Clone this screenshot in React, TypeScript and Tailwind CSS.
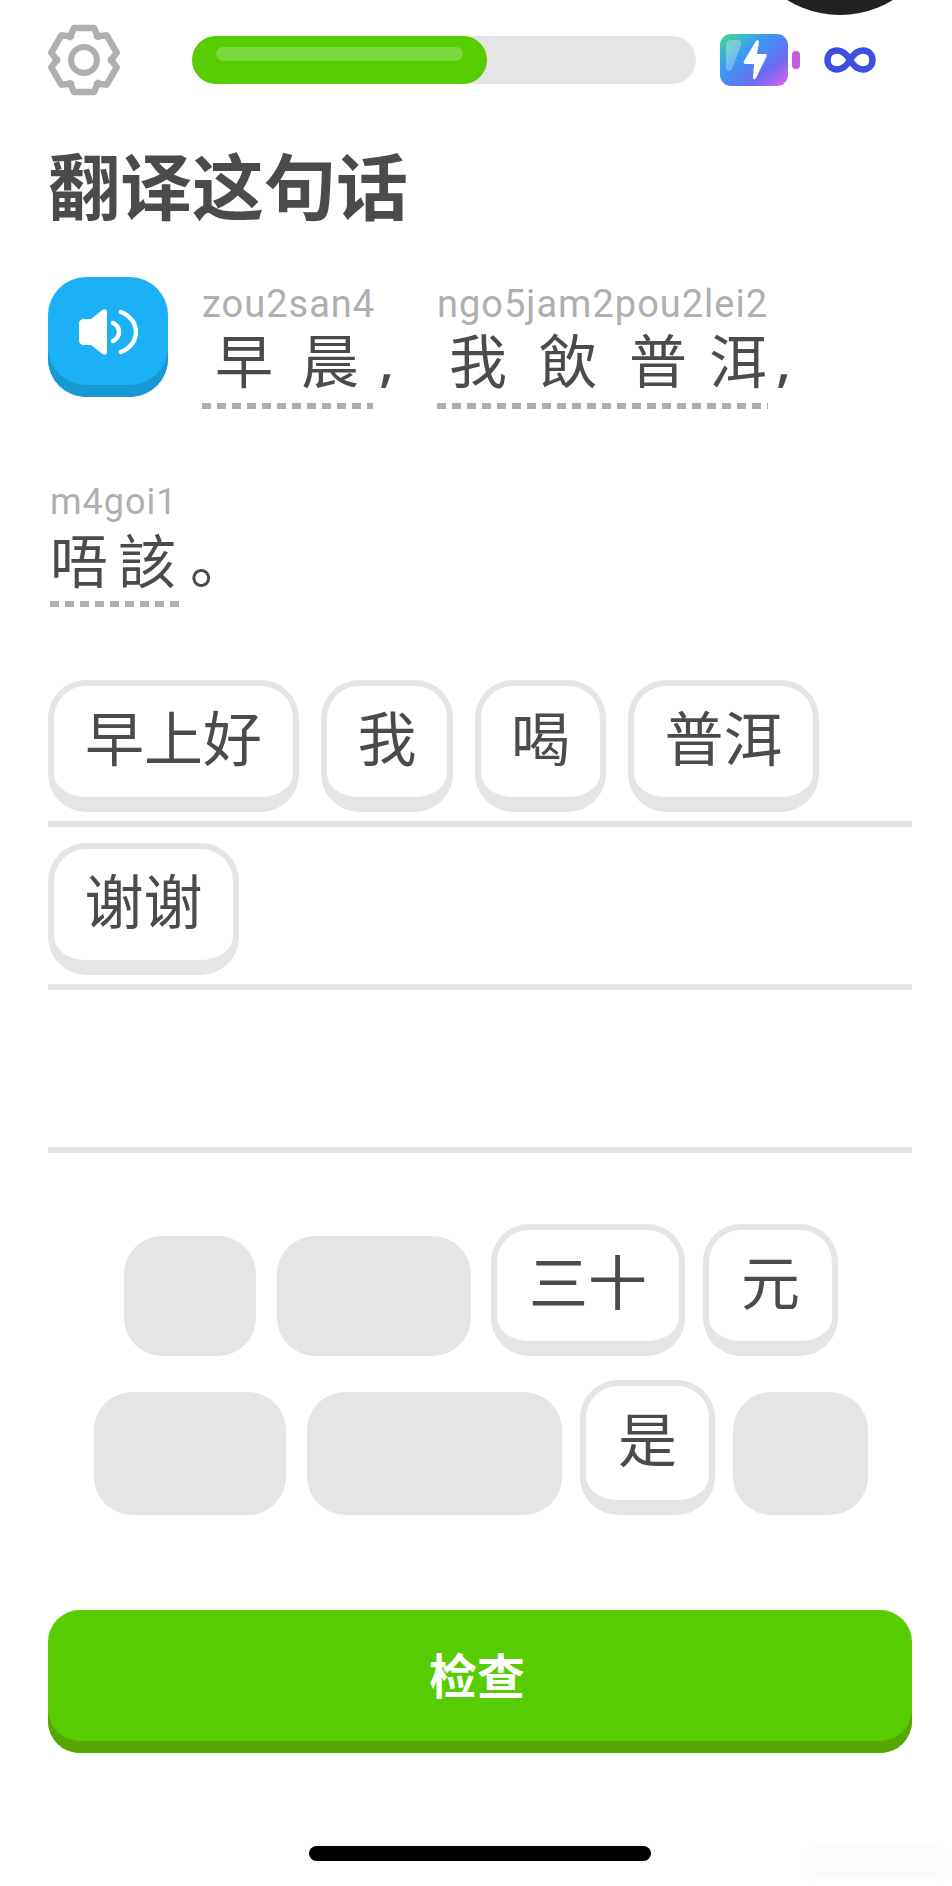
import React from 'react';

const cjk = 'font-["Noto_Sans_CJK_SC","Noto_Sans",sans-serif]';
const roboto = "font-['Roboto',sans-serif]";

// six blunt teeth around the centre, viewBox 72x72
const gearPath = () => {
  const pts: string[] = [];
  for (let i = 0; i < 6; i++) {
    const a = (i * Math.PI) / 3 - Math.PI / 2;
    const at = (r: number, off: number) => {
      const x = 36 + r * Math.cos(a) - off * Math.sin(a);
      const y = 36 + r * Math.sin(a) + off * Math.cos(a);
      return `${x.toFixed(1)} ${y.toFixed(1)}`;
    };
    pts.push(at(23, -14), at(32, -10), at(32, 10), at(23, 14));
  }
  return `M${pts.join('L')}Z`;
};

const Gear = () => (
  <svg width="72" height="72" viewBox="0 0 72 72" className="shrink-0">
    <path d={gearPath()} fill="none" stroke="#afafaf" strokeWidth="6.500" strokeLinejoin="round" />
    <circle cx="36" cy="36" r="13" fill="none" stroke="#afafaf" strokeWidth="6" />
  </svg>
);

const Dashes = () => (
  <div className="h-[6px] bg-[repeating-linear-gradient(90deg,#afafaf_0,#afafaf_9px,transparent_9px,transparent_15px)]" />
);

const Tile: React.FC<{ w: string; h?: string; label: string }> = ({ w, h = 'h-[132px]', label }) => (
  <div className={`${w} ${h} shrink-0 rounded-[38px] border-[6px] border-b-[15px] border-[#e5e5e5] bg-white pb-[13px] flex items-center justify-center text-[59px] leading-none text-[#4b4b4b] ${cjk}`}>
    {label}
  </div>
);

const Ghost: React.FC<{ w: string; h: string }> = ({ w, h }) => (
  <div className={`${w} ${h} shrink-0 rounded-[38px] bg-[#e5e5e5]`} />
);

const AnswerRow: React.FC<{ children?: React.ReactNode }> = ({ children }) => (
  <div className="h-[163px] pt-[16px] border-b-[6px] border-[#e5e5e5] flex gap-[22px]">{children}</div>
);

const Battery = () => (
  <svg width="80" height="52" viewBox="0 0 80 52" className="shrink-0">
    <defs>
      <linearGradient id="batt" x1="0" y1="0" x2="1" y2="1">
        <stop offset="0" stopColor="#3fe08a" />
        <stop offset="0.35" stopColor="#3a9bf5" />
        <stop offset="0.7" stopColor="#6a6cf0" />
        <stop offset="1" stopColor="#e060f0" />
      </linearGradient>
    </defs>
    <rect x="0" y="0" width="68" height="52" rx="11" fill="url(#batt)" />
    <path d="M6 12c0-4 2-6 6-6h5c4 0 5 2 4 5l-9 24c-2 3-6 2-6-2z" fill="#fff" fillOpacity="0.3" />
    <path d="M36 7c1-1.500 3-1 3 1l-2 12h8c1.500 0 2 1.500 1.500 2.500L36 44c-1 2-3.500 1.500-3-1l1-13h-8c-2 0-3-1.500-2-3z" fill="#fff" />
    <rect x="72" y="17" width="8" height="18" rx="4" fill="#c25de0" />
  </svg>
);

const Speaker = () => (
  <div className="w-[120px] h-[120px] shrink-0 rounded-[38px] bg-[#1cb0f6] shadow-[inset_0_-12px_0_#1899d6] flex items-center justify-center">
    <svg width="60" height="46" viewBox="0 0 60 46" className="mb-[11px]">
      <path d="M29 3v40c0 2.500-2.500 3.500-4.500 2L13 36H6c-3 0-5-2-5-5V15c0-3 2-5 5-5h7L24.500 1C26.500-.5 29 .5 29 3z" fill="#fff" />
      <path d="M35 14C43 18 43 28 35 32" fill="none" stroke="#fff" strokeWidth="4.500" strokeLinecap="round" />
      <path d="M43 3C63 11 63 35 43 43" fill="none" stroke="#fff" strokeWidth="4.500" strokeLinecap="round" />
    </svg>
  </div>
);

export default function App() {
  return (
    <div className="relative w-[952px] h-[1886px] bg-white overflow-hidden pl-[48px] pr-[40px] pt-[24px]">
      <div className="absolute left-[739px] top-[-187px] w-[202px] h-[202px] rounded-full bg-[#222222]" />
      <div className="absolute left-[808px] top-[1846px] w-[136px] h-[32px] bg-[#fbfbfb] blur-[3px]" />

      <div className="flex items-center h-[72px]">
        <Gear />
        <div className="relative ml-[72px] w-[504px] h-[48px] rounded-full bg-[#e5e5e5]">
          <div className="w-[295px] h-[48px] rounded-[24px] bg-[#58cc02] pt-[11px] px-[24px]">
            <div className="h-[14px] rounded-[7px] bg-[#7cd93c]" />
          </div>
        </div>
        <div className="ml-[24px]"><Battery /></div>
        <svg width="52" height="26" viewBox="0 0 52 26" className="ml-[24px] shrink-0">
          <path d="M26 13C22 6 18 3.500 13 3.500 7.500 3.500 3.500 7.500 3.500 13s4 9.500 9.500 9.500c5 0 9-2.500 13-9.500 4-7 8-9.500 13-9.500 5.500 0 9.500 4 9.500 9.500s-4 9.500-9.500 9.500c-5 0-9-2.500-13-9.500z" fill="none" stroke="#3c4fe0" strokeWidth="6.500" />
        </svg>
      </div>

      <h1 className={`mt-[51px] h-[72px] text-[72px] leading-[72px] font-bold text-[#4b4b4b] ${cjk}`}>翻译这句话</h1>

      <div className="mt-[58px] flex">
        <Speaker />
        <div className="ml-[34px] flex pt-[7px]">
          <div className="w-[171px]">
            <div className={`h-[40px] text-[38px] tracking-[1px] leading-[40px] text-[#afafaf] whitespace-nowrap ${roboto}`}>zou2san4</div>
            <div className={`mt-[5px] h-[58px] pl-[13px] flex gap-[28px] text-[58px] leading-[58px] text-[#4b4b4b] ${cjk}`}>
              <span>早</span><span>晨</span>
            </div>
            <div className="mt-[16px]"><Dashes /></div>
          </div>
          <div className={`w-[64px] pt-[46px] pl-[6px] text-[56px] font-medium leading-[58px] text-[#4b4b4b] font-['Noto_Sans',sans-serif]`}>,</div>
          <div className="w-[331px] relative">
            <div className={`h-[40px] text-[38px] tracking-[1px] leading-[40px] text-[#afafaf] whitespace-nowrap ${roboto}`}>ngo5jam2pou2lei2</div>
            <div className={`mt-[5px] h-[58px] pl-[12px] flex text-[58px] leading-[58px] text-[#4b4b4b] ${cjk}`}>
              <span className="mr-[32px]">我</span>
              <span className="mr-[32px]">飲</span>
              <span className="mr-[22px]">普</span>
              <span>洱</span>
            </div>
            <div className="mt-[16px]"><Dashes /></div>
          </div>
          <div className={`pt-[46px] pl-[8px] text-[56px] font-medium leading-[58px] text-[#4b4b4b] font-['Noto_Sans',sans-serif]`}>,</div>
        </div>
      </div>

      <div className="mt-[75px] ml-[2px] flex">
        <div className="w-[132px]">
          <div className={`h-[36px] text-[36px] tracking-[1px] leading-[36px] text-[#afafaf] ${roboto}`}>m4goi1</div>
          <div className={`mt-[9px] h-[58px] flex gap-[10px] text-[58px] leading-[58px] text-[#4b4b4b] ${cjk}`}>
            <span>唔</span><span>該</span>
          </div>
          <div className="mt-[14px]"><Dashes /></div>
        </div>
        <div className={`mt-[45px] ml-[8px] h-[58px] text-[58px] leading-[58px] text-[#4b4b4b] ${cjk}`}>。</div>
      </div>

      <div className="mt-[57px]">
        <AnswerRow>
          <Tile w="w-[251px]" label="早上好" />
          <Tile w="w-[132px]" label="我" />
          <Tile w="w-[131px]" label="喝" />
          <Tile w="w-[191px]" label="普洱" />
        </AnswerRow>
        <AnswerRow>
          <Tile w="w-[191px]" label="谢谢" />
        </AnswerRow>
        <AnswerRow />
      </div>

      <div className="mt-[71px] ml-[76px] flex items-end">
        <Ghost w="w-[132px] mr-[21px]" h="h-[120px]" />
        <Ghost w="w-[194px] mr-[20px]" h="h-[120px]" />
        <Tile w="w-[194px] mr-[18px]" label="三十" />
        <Tile w="w-[135px]" label="元" />
      </div>
      <div className="mt-[24px] ml-[46px] flex items-end">
        <Ghost w="w-[192px] mr-[21px]" h="h-[123px]" />
        <Ghost w="w-[255px] mr-[18px]" h="h-[123px]" />
        <Tile w="w-[135px] mr-[18px]" h="h-[135px]" label="是" />
        <Ghost w="w-[135px]" h="h-[123px]" />
      </div>

      <div className={`mt-[95px] h-[143px] rounded-[32px] bg-[#58cc02] shadow-[inset_0_-12px_0_#58a700] pb-[18px] pr-[6px] flex items-center justify-center text-white text-[48px] font-bold ${cjk}`}>
        检查
      </div>

      <div className="mt-[93px] mx-auto w-[342px] h-[15px] rounded-full bg-black" />
    </div>
  );
}
